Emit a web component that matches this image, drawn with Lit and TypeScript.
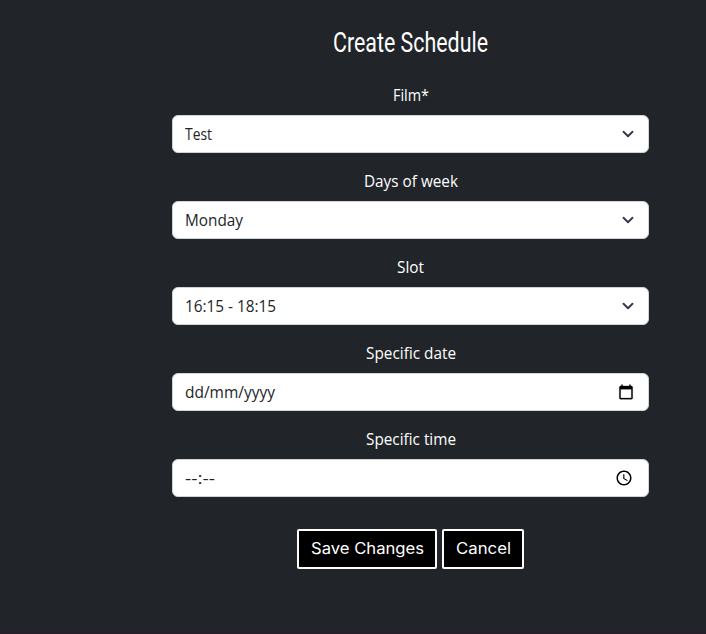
import { LitElement, html, css, svg } from "lit";
import { customElement, property } from "lit/decorators.js";

/** One line of text set to a fixed advance width. */
@customElement("fit-text")
export class FitText extends LitElement {
  @property() text = "";
  @property({ type: Number }) width = 0;
  @property({ type: Number }) baseline = 18;
  static styles = css`
    :host { display: inline-block; }
    svg { display: block; overflow: visible; }
    text { fill: currentColor; white-space: pre; }
  `;
  render() {
    return html`<svg width=${this.width} height="24">
      ${svg`<text x="0" y=${this.baseline} textLength=${this.width} lengthAdjust="spacingAndGlyphs">${this.text}</text>`}
    </svg>`;
  }
}

type Icon = "chevron" | "calendar" | "clock";
interface Field { label: string; labelWidth: number; value: string; valueWidth: number; icon: Icon; }

const fields: Field[] = [
  { label: "Film*", labelWidth: 36, value: "Test", valueWidth: 27, icon: "chevron" },
  { label: "Days of week", labelWidth: 94, value: "Monday", valueWidth: 58, icon: "chevron" },
  { label: "Slot", labelWidth: 27, value: "16:15 - 18:15", valueWidth: 91, icon: "chevron" },
  { label: "Specific date", labelWidth: 90, value: "dd/mm/yyyy", valueWidth: 90, icon: "calendar" },
  { label: "Specific time", labelWidth: 90, value: "--:--", valueWidth: 30, icon: "clock" },
];

const icons = {
  chevron: html`<svg class="chevron" viewBox="0 0 16 16"><path d="m2 5 6 6 6-6" fill="none" stroke="#3b3549" stroke-width="2.500" stroke-linecap="round" stroke-linejoin="round"/></svg>`,
  calendar: html`<svg class="calendar" viewBox="0 0 24 24"><path d="M20 3h-1V1h-2v2H7V1H5v2H4c-1.100 0-2 .9-2 2v16c0 1.100.9 2 2 2h16c1.100 0 2-.9 2-2V5c0-1.100-.9-2-2-2zm0 18H4V8h16v13z"/></svg>`,
  clock: html`<svg class="clock" viewBox="0 0 24 24"><path d="M11.990 2C6.470 2 2 6.480 2 12s4.470 10 9.990 10C17.520 22 22 17.520 22 12S17.520 2 11.990 2zM12 20c-4.420 0-8-3.580-8-8s3.580-8 8-8 8 3.580 8 8-3.580 8-8 8zm.5-13H11v6l5.250 3.150.75-1.230-4.500-2.670z"/></svg>`,
};

@customElement("app-root")
export class AppRoot extends LitElement {
  static styles = css`
    :host {
      display: block; box-sizing: border-box; height: 634px;
      padding: 24px 57px 0 172px; overflow: hidden;
      background: #212529; color: #fff;
      border-bottom: 3px solid #271f29;
      font: 15.700px/24px "Open Sans", "Noto Sans", sans-serif;
    }
    form { display: flex; flex-direction: column; align-items: stretch; }
    h1 {
      margin: 0 0 19px; height: 40px; display: flex; justify-content: center; align-items: center;
      font: 400 27.500px/32px Roboto, sans-serif;
    }
    .field { display: flex; flex-direction: column; gap: 8px; margin-bottom: 16px; }
    .label { display: flex; justify-content: center; height: 24px; }
    .control {
      box-sizing: border-box; height: 38px; border: 1px solid #ced4da; border-radius: 6px;
      background: #fff; color: #212529; padding: 0 12px;
      display: flex; align-items: center; justify-content: space-between;
    }
    .chevron { width: 16px; height: 12px; }
    .calendar { width: 16px; height: 16px; margin-right: 2px; fill: #000; stroke: #000; stroke-width: .4; }
    .clock { width: 18px; height: 18px; margin: 0 3px 1px 0; fill: #000; }
    .actions { display: flex; justify-content: center; gap: 5px; margin-top: 16px; }
    button {
      box-sizing: border-box; height: 40px; padding: 0; border: 2px solid #fff; border-radius: 2px;
      background: #000; color: #fff; font: 400 15.500px/24px Inter, sans-serif;
      display: flex; align-items: center; justify-content: center;
    }
    .save { width: 140px; }
    .cancel { width: 82px; }
  `;
  render() {
    return html`<form>
      <h1><fit-text text="Create Schedule" .width=${155} .baseline=${20}></fit-text></h1>
      ${fields.map((f) => html`<div class="field">
        <div class="label"><fit-text .text=${f.label} .width=${f.labelWidth}></fit-text></div>
        <div class="control"><fit-text .text=${f.value} .width=${f.valueWidth}></fit-text>${icons[f.icon]}</div>
      </div>`)}
      <div class="actions">
        <button type="button" class="save"><fit-text text="Save Changes" .width=${113} .baseline=${17}></fit-text></button>
        <button type="button" class="cancel"><fit-text text="Cancel" .width=${55} .baseline=${17}></fit-text></button>
      </div>
    </form>`;
  }
}
